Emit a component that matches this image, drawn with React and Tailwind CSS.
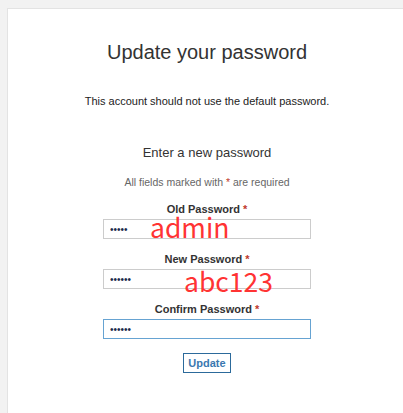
import React from "react";

function Field({ label, value, focused }) {
  return (
    <div className="flex flex-col items-center">
      <label className="h-[14px] text-[11px] leading-[14px] font-bold text-[#333333]">
        {label} <span className="text-[#c0392b]">*</span>
      </label>
      <input
        type="password"
        readOnly
        defaultValue={value}
        className={
          "mt-[3px] h-[20px] w-[208px] bg-white px-[6px] text-[10px] text-[#1a2b4a] outline-none " +
          (focused
            ? "border border-[#66a3d2]"
            : "border border-[#cccccc]")
        }
      />
    </div>
  );
}

export default function App() {
  return (
    <div className="relative h-[413px] w-[403px] overflow-hidden bg-[#f2f2f2] font-['Liberation_Sans',Arial,sans-serif]">
      <div className="ml-[7px] mt-[8px] h-[420px] w-[400px] border border-[#e3e3e3] bg-white">
        <div className="flex flex-col items-center">
          <h1 className="mt-[31px] h-[24px] text-[20px] leading-[24px] text-[#333333]">
            Update your password
          </h1>
          <p className="mt-[30px] h-[14px] text-[11px] leading-[14px] text-[#222222]">
            This account should not use the default password.
          </p>
          <h2 className="mt-[36px] h-[18px] text-[13px] leading-[18px] text-[#333333]">
            Enter a new password
          </h2>
          <p className="mt-[13px] h-[14px] text-[10.5px] leading-[14px] text-[#666666]">
            All fields marked with <span className="text-[#c0392b]">*</span> are required
          </p>
          <div className="mt-[13px] flex flex-col gap-[13px]">
            <Field label="Old Password" value="admin" />
            <Field label="New Password" value="abc123" />
            <Field label="Confirm Password" value="abc123" focused />
          </div>
          <button className="mt-[14px] h-[20px] w-[48px] border border-[#2c6a9b] bg-white text-[11px] font-bold leading-[18px] text-[#3a78b0]">
            Update
          </button>
        </div>
      </div>
      <span className="absolute left-[150px] top-[211px] font-['Noto_Sans_CJK_SC','Noto_Sans',sans-serif] text-[26.5px] leading-[32px] text-[#ff3333]">
        admin
      </span>
      <span className="absolute left-[184px] top-[264px] font-['Noto_Sans_CJK_SC','Noto_Sans',sans-serif] text-[26.5px] leading-[34px] text-[#ff3333]">
        abc123
      </span>
    </div>
  );
}
